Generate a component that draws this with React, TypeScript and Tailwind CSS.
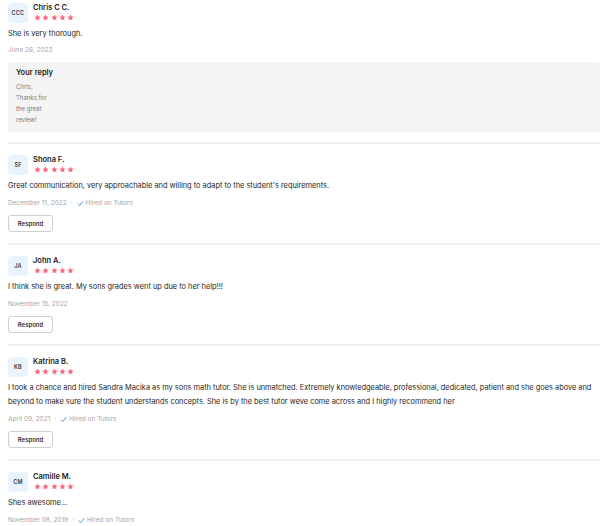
import React from "react";

type Review = {
  initials: string;
  name: string;
  text: string[];
  date: string;
  hired?: boolean;
  respond?: boolean;
  reply?: string[];
};

const reviews: Review[] = [
  {
    initials: "CCC",
    name: "Chris C C.",
    text: ["She is very thorough."],
    date: "June 26, 2023",
    reply: ["Chris,", "Thanks for", "the great", "review!"],
  },
  {
    initials: "SF",
    name: "Shona F.",
    text: ["Great communication, very approachable and willing to adapt to the student's requirements."],
    date: "December 11, 2022",
    hired: true,
    respond: true,
  },
  {
    initials: "JA",
    name: "John A.",
    text: ["I think she is great. My sons grades went up due to her help!!!"],
    date: "November 15, 2022",
    respond: true,
  },
  {
    initials: "KB",
    name: "Katrina B.",
    text: [
      "I took a chance and hired Sandra Macika as my sons math tutor. She is unmatched. Extremely knowledgeable, professional, dedicated, patient and she goes above and beyond to make sure the student understands concepts. She is by the best tutor weve come across and I highly recommend her",
    ],
    date: "April 09, 2021",
    hired: true,
    respond: true,
  },
  {
    initials: "CM",
    name: "Camille M.",
    text: ["Shes awesome..."],
    date: "November 08, 2019",
    hired: true,
  },
];

function Star() {
  return (
    <svg width="7" height="7" viewBox="0 0 24 24" className="shrink-0">
      <path
        d="M12 1.5l3.2 6.9 7.5.9-5.5 5.2 1.4 7.4L12 18.2l-6.6 3.7 1.4-7.4L1.3 9.3l7.5-.9z"
        fill="#fb6a7e"
      />
    </svg>
  );
}

function Check() {
  return (
    <svg width="7" height="7" viewBox="0 0 24 24" className="shrink-0">
      <path d="M3 13l6 6L21 5" fill="none" stroke="#3d8fe0" strokeWidth="3.2" strokeLinecap="round" strokeLinejoin="round" />
    </svg>
  );
}

function ReviewItem({ r, first }: { r: Review; first: boolean }) {
  return (
    <div className={`${first ? "pt-[3px] pb-[10px]" : "pt-[11px] pb-[11px]"} border-b-2 border-[#efefef]`}>
      <div className="flex items-start gap-[5px]">
        <div className="w-[20px] h-[20px] rounded-[4px] bg-[#e8f3fd] flex items-center justify-center text-[5.5px] font-semibold text-[#3a3a3a] tracking-[0.2px]">
          {r.initials}
        </div>
        <div className="flex flex-col">
          <div className="text-[7.5px] leading-[10px] font-semibold text-[#222]">{r.name}</div>
          <div className="flex gap-[1.3px] mt-[1px] ml-[1px]">
            <Star />
            <Star />
            <Star />
            <Star />
            <Star />
          </div>
        </div>
      </div>
      <div className="mt-[4px] text-[7.4px] leading-[14px] text-[#262626]">
        {r.text.map((t, i) => (
          <div key={i}>{t}</div>
        ))}
      </div>
      <div className={`${first ? "mt-[4px]" : "mt-[5px]"} flex items-center gap-[4px] text-[6.5px] leading-[10px] text-[#a4a4a4]`}>
        <span>{r.date}</span>
        {r.hired && (
          <>
            <span>·</span>
            <span className="flex items-center gap-[2px]">
              <Check />
              <span>Hired on Tutors</span>
            </span>
          </>
        )}
      </div>
      {r.respond && (
        <div className="mt-[7px]">
          <button className="h-[17px] w-[45px] rounded-[3px] border border-[#cfcfcf] bg-white text-[6px] font-semibold text-[#333] flex items-center justify-center">
            Respond
          </button>
        </div>
      )}
      {r.reply && (
        <div className="mt-[7px] bg-[#f4f4f4] rounded-[4px] px-[8px] pt-[6px] pb-[7px]">
          <div className="text-[7.5px] leading-[10px] font-semibold text-[#222]">Your reply</div>
          <div className="mt-[3px] text-[6px] leading-[11px] text-[#7a7a7a]">
            {r.reply.map((t, i) => (
              <div key={i}>{t}</div>
            ))}
          </div>
        </div>
      )}
    </div>
  );
}

export default function App() {
  return (
    <div className="w-[600px] h-[526px] overflow-hidden bg-white pl-[8px]" style={{ fontFamily: "Inter, 'Noto Sans', sans-serif" }}>
      {reviews.map((r, i) => (
        <ReviewItem key={i} r={r} first={i === 0} />
      ))}
    </div>
  );
}
